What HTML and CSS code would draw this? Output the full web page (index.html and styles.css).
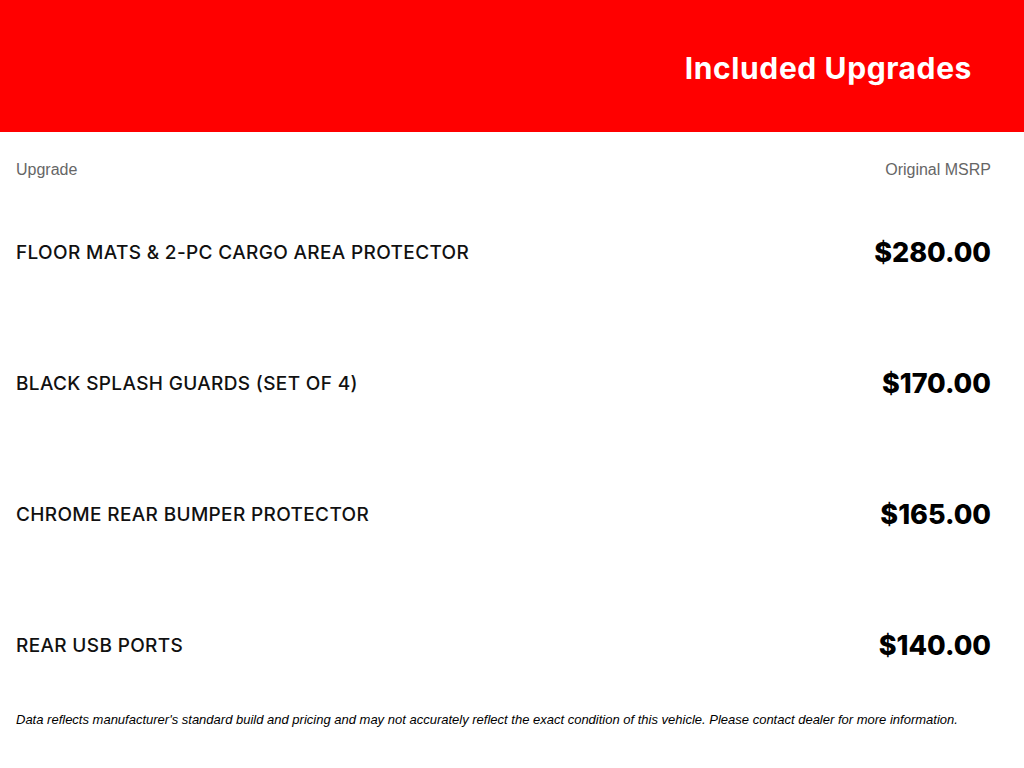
FILE: index.html
```html
<!DOCTYPE html>
<html>
<head>
<meta charset="utf-8">
<link rel="stylesheet" href="styles.css">
</head>
<body>
<header class="banner">
  <h1 class="banner-title">Included Upgrades</h1>
</header>
<main class="table">
  <div class="col-head">
    <span>Upgrade</span>
    <span>Original MSRP</span>
  </div>
  <div class="row">
    <span class="name">FLOOR MATS &amp; 2-PC CARGO AREA PROTECTOR</span>
    <span class="price">$280.00</span>
  </div>
  <div class="row">
    <span class="name">BLACK SPLASH GUARDS (SET OF 4)</span>
    <span class="price">$170.00</span>
  </div>
  <div class="row">
    <span class="name">CHROME REAR BUMPER PROTECTOR</span>
    <span class="price">$165.00</span>
  </div>
  <div class="row">
    <span class="name">REAR USB PORTS</span>
    <span class="price">$140.00</span>
  </div>
  <p class="disclaimer">Data reflects manufacturer's standard build and pricing and may not accurately reflect the exact condition of this vehicle. Please contact dealer for more information.</p>
</main>
</body>
</html>
```

FILE: styles.css
```css
* { box-sizing: border-box; }
html, body { margin: 0; padding: 0; background: #fff; }
body { font-family: "Inter", "Liberation Sans", sans-serif; color: #000; }

.banner {
  height: 132px;
  background: #ff0000;
  display: flex;
  align-items: center;
  justify-content: flex-end;
  padding-right: 52px;
  padding-top: 4px;
}
.banner-title {
  margin: 0;
  color: #fff;
  font-size: 30px;
  font-weight: 700;
  letter-spacing: 0.6px;
}

.table { padding: 0 33px 0 16px; }

.col-head {
  display: flex;
  justify-content: space-between;
  padding-top: 29px;
  height: 54px;
  font-family: "Liberation Sans", Arial, sans-serif;
  font-size: 16px;
  line-height: 18px;
  color: #666;
}

.row {
  height: 131px;
  display: flex;
  align-items: center;
  justify-content: space-between;
  padding-top: 2px;
}
.name {
  font-size: 19px;
  font-weight: 500;
  letter-spacing: 0.35px;
  color: #111;
}
.price {
  font-size: 27px;
  font-weight: 800;
  color: #000;
}

.disclaimer {
  margin: 2px 0 0;
  font-family: "Liberation Sans", Arial, sans-serif;
  font-style: italic;
  font-size: 13px;
  line-height: 16px;
  color: #000;
}
```
